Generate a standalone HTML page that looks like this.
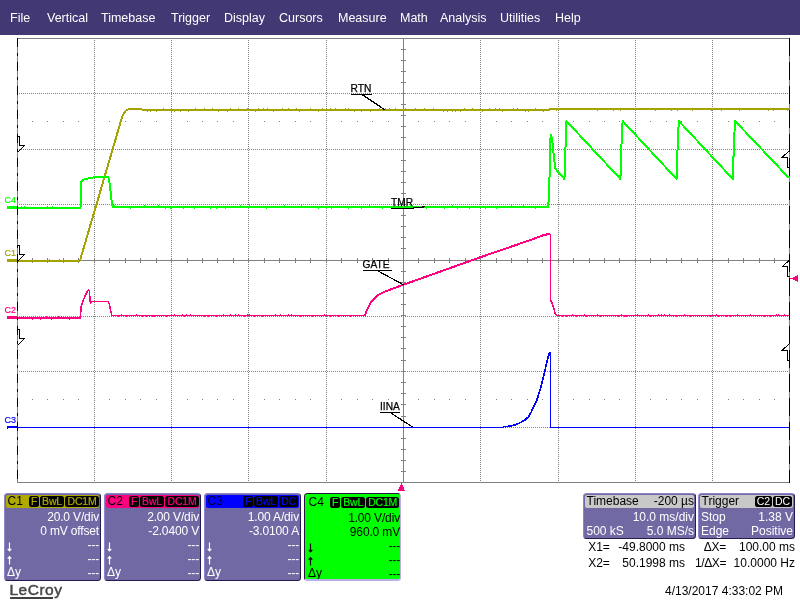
<!DOCTYPE html>
<html><head><meta charset="utf-8"><title>LeCroy</title>
<style>
html,body{margin:0;padding:0;background:#fff;}
body{width:800px;height:600px;position:relative;overflow:hidden;font-family:"Liberation Sans",sans-serif;font-size:12px;color:#000;}
#all{position:absolute;left:0;top:0;width:800px;height:600px;will-change:transform;}
#menu{position:absolute;left:0;top:0;width:800px;height:35px;background:#423874;color:#fff;}
#menu span{position:absolute;top:11px;line-height:14px;font-size:12.5px;white-space:nowrap;}
svg{position:absolute;left:0;top:0;}
svg text{font-family:"Liberation Sans",sans-serif;}
.ch{position:absolute;top:493px;width:97px;height:88px;box-sizing:border-box;background:#7169a4;border:1px solid;border-color:#8e86cc #241c52 #241c52 #8e86cc;border-radius:3.5px;overflow:hidden;color:#fff;}
.in{position:absolute;left:1px;top:1px;right:1px;bottom:1px;}
.ch.sel .in{left:0;top:0;right:0;bottom:0}
.ch .hd{position:absolute;left:0;top:0;right:0;height:13px;background:var(--c);border-radius:2px;}
.ch b{position:absolute;left:1.5px;top:0px;font-weight:normal;font-size:12px;line-height:12px;}
.ch i{-webkit-text-stroke:0.2px var(--c);position:absolute;top:1px;height:11px;background:#000;color:var(--c);border-radius:2.5px;font-style:normal;font-size:10.5px;line-height:11px;text-align:center;letter-spacing:-0.2px;}
.ch u{position:absolute;right:0px;text-decoration:none;font-size:12px;line-height:14px;white-space:nowrap;letter-spacing:-0.15px;}
.ch s{position:absolute;left:1px;text-decoration:none;font-size:12px;line-height:14px;}
.ch.sel{background:#00ff00;border-width:1px 1px 2px 1px;border-color:#241440 #b8b0e8 #b8b0e8 #241440;color:#000;}
.ch.sel .ar{left:2px;top:2px}
.ch.sel u{right:0px} .ch.sel s{left:3px} .ch.sel b{left:3.5px;top:1.7px} .ch.sel i{top:3px}
.ch.sel u,.ch.sel s{margin-top:2px}
.tb{position:absolute;top:493px;height:46px;box-sizing:border-box;background:#7169a4;border:1px solid;border-color:#8e86cc #241c52 #241c52 #8e86cc;border-radius:3.5px;overflow:hidden;color:#fff;}
.tb .hd{position:absolute;left:0;top:0;right:0;height:13px;background:#c8c8c8;border-radius:2px;}
.tb span{position:absolute;white-space:nowrap;font-size:12px;line-height:14px;}
.tb i{position:absolute;top:1px;height:11px;background:#000;color:#fff;border-radius:2.5px;font-style:normal;font-size:10.5px;line-height:11px;text-align:center;}
.x{position:absolute;white-space:nowrap;font-size:12px;line-height:14px;}
#logo{position:absolute;left:9.5px;top:580.6px;font-size:15.5px;font-weight:normal;-webkit-text-stroke:0.5px #484848;color:#484848;line-height:18px;letter-spacing:0.5px;}
#logo:after{content:'';position:absolute;left:0.5px;top:16.6px;width:43px;height:1.7px;background:#404040;}
</style></head>
<body><div id="all">
<div id="menu"><span style="left:10px">File</span><span style="left:47px">Vertical</span><span style="left:101px">Timebase</span><span style="left:171px">Trigger</span><span style="left:224px">Display</span><span style="left:279px">Cursors</span><span style="left:338px">Measure</span><span style="left:400px">Math</span><span style="left:440px">Analysis</span><span style="left:500px">Utilities</span><span style="left:555px">Help</span></div>
<svg width="800" height="600" viewBox="0 0 800 600" shape-rendering="crispEdges">
<rect x="17.5" y="38.5" width="772.0" height="444.0" fill="#fff" stroke="#808080" stroke-width="1"/>
<path d="M94.5,40 V482" stroke="#808080" stroke-width="1" stroke-dasharray="1 1"/>
<path d="M171.5,40 V482" stroke="#808080" stroke-width="1" stroke-dasharray="1 1"/>
<path d="M248.5,40 V482" stroke="#808080" stroke-width="1" stroke-dasharray="1 1"/>
<path d="M326.5,40 V482" stroke="#808080" stroke-width="1" stroke-dasharray="1 1"/>
<path d="M480.5,40 V482" stroke="#808080" stroke-width="1" stroke-dasharray="1 1"/>
<path d="M558.5,40 V482" stroke="#808080" stroke-width="1" stroke-dasharray="1 1"/>
<path d="M635.5,40 V482" stroke="#808080" stroke-width="1" stroke-dasharray="1 1"/>
<path d="M712.5,40 V482" stroke="#808080" stroke-width="1" stroke-dasharray="1 1"/>
<path d="M19,93.5 H789" stroke="#808080" stroke-width="1" stroke-dasharray="1 1"/>
<path d="M19,149.5 H789" stroke="#808080" stroke-width="1" stroke-dasharray="1 1"/>
<path d="M19,204.5 H789" stroke="#808080" stroke-width="1" stroke-dasharray="1 1"/>
<path d="M19,316.5 H789" stroke="#808080" stroke-width="1" stroke-dasharray="1 1"/>
<path d="M19,371.5 H789" stroke="#808080" stroke-width="1" stroke-dasharray="1 1"/>
<path d="M19,427.5 H789" stroke="#808080" stroke-width="1" stroke-dasharray="1 1"/>
<path d="M403.5,39 V482 M18,260.5 H789" stroke="#808080" stroke-width="1"/>
<path d="M401,49.5 H406 M401,60.5 H406 M401,71.5 H406 M401,82.5 H406 M401,93.5 H406 M401,104.5 H406 M401,115.5 H406 M401,126.5 H406 M401,137.5 H406 M401,149.5 H406 M401,160.5 H406 M401,171.5 H406 M401,182.5 H406 M401,193.5 H406 M401,204.5 H406 M401,215.5 H406 M401,226.5 H406 M401,237.5 H406 M401,248.5 H406 M401,260.5 H406 M401,271.5 H406 M401,282.5 H406 M401,293.5 H406 M401,304.5 H406 M401,315.5 H406 M401,326.5 H406 M401,337.5 H406 M401,348.5 H406 M401,360.5 H406 M401,371.5 H406 M401,382.5 H406 M401,393.5 H406 M401,404.5 H406 M401,416.5 H406 M401,427.5 H406 M401,438.5 H406 M401,449.5 H406 M401,460.5 H406 M401,471.5 H406 M32.5,258 V263 M47.5,258 V263 M63.5,258 V263 M78.5,258 V263 M94.5,258 V263 M109.5,258 V263 M125.5,258 V263 M140.5,258 V263 M156.5,258 V263 M171.5,258 V263 M187.5,258 V263 M202.5,258 V263 M217.5,258 V263 M233.5,258 V263 M248.5,258 V263 M264.5,258 V263 M279.5,258 V263 M295.5,258 V263 M310.5,258 V263 M326.5,258 V263 M341.5,258 V263 M357.5,258 V263 M372.5,258 V263 M388.5,258 V263 M403.5,258 V263 M418.5,258 V263 M434.5,258 V263 M449.5,258 V263 M465.5,258 V263 M480.5,258 V263 M496.5,258 V263 M511.5,258 V263 M527.5,258 V263 M542.5,258 V263 M558.5,258 V263 M573.5,258 V263 M589.5,258 V263 M604.5,258 V263 M619.5,258 V263 M635.5,258 V263 M650.5,258 V263 M666.5,258 V263 M681.5,258 V263 M697.5,258 V263 M712.5,258 V263 M728.5,258 V263 M743.5,258 V263 M759.5,258 V263 M774.5,258 V263" stroke="#808080" stroke-width="1"/>
<path d="M32,121.5 h1 M47,121.5 h1 M63,121.5 h1 M78,121.5 h1 M109,121.5 h1 M125,121.5 h1 M140,121.5 h1 M156,121.5 h1 M187,121.5 h1 M202,121.5 h1 M217,121.5 h1 M233,121.5 h1 M264,121.5 h1 M279,121.5 h1 M295,121.5 h1 M310,121.5 h1 M341,121.5 h1 M357,121.5 h1 M372,121.5 h1 M388,121.5 h1 M418,121.5 h1 M434,121.5 h1 M449,121.5 h1 M465,121.5 h1 M496,121.5 h1 M511,121.5 h1 M527,121.5 h1 M542,121.5 h1 M573,121.5 h1 M589,121.5 h1 M604,121.5 h1 M619,121.5 h1 M650,121.5 h1 M666,121.5 h1 M681,121.5 h1 M697,121.5 h1 M728,121.5 h1 M743,121.5 h1 M759,121.5 h1 M774,121.5 h1 M32,399.5 h1 M47,399.5 h1 M63,399.5 h1 M78,399.5 h1 M109,399.5 h1 M125,399.5 h1 M140,399.5 h1 M156,399.5 h1 M187,399.5 h1 M202,399.5 h1 M217,399.5 h1 M233,399.5 h1 M264,399.5 h1 M279,399.5 h1 M295,399.5 h1 M310,399.5 h1 M341,399.5 h1 M357,399.5 h1 M372,399.5 h1 M388,399.5 h1 M418,399.5 h1 M434,399.5 h1 M449,399.5 h1 M465,399.5 h1 M496,399.5 h1 M511,399.5 h1 M527,399.5 h1 M542,399.5 h1 M573,399.5 h1 M589,399.5 h1 M604,399.5 h1 M619,399.5 h1 M650,399.5 h1 M666,399.5 h1 M681,399.5 h1 M697,399.5 h1 M728,399.5 h1 M743,399.5 h1 M759,399.5 h1 M774,399.5 h1" stroke="#808080" stroke-width="1"/>
<polyline points="7.0,260.5 80.0,260.5 122.0,117.3 124.0,113.0 126.0,110.5 129.0,109.0 132.0,108.5 140.0,108.5 142.0,109.5 165.0,109.5 170.0,110.0 548.0,110.0 550.0,109.4 789.0,109.4" fill="none" stroke="#a4a400" stroke-width="2" stroke-linejoin="round" />
<polyline points="7.0,207.5 80.5,207.5 81.5,181.0 84.0,179.5 95.0,177.0 108.0,177.0 109.0,179.0 110.0,187.0 111.0,195.0 112.0,204.0 113.0,207.0 548.0,207.0 549.0,197.0 549.7,170.0 550.6,134.5 552.0,138.0 553.0,147.0 554.0,158.0 555.0,166.0 555.6,169.0 564.4,179.0 565.0,168.0 565.6,143.0 566.4,121.0 620.4,179.0 621.4,147.0 622.6,121.0 676.6,179.0 677.6,147.0 678.8,121.0 732.8,179.0 733.8,147.0 735.0,121.0 789.0,178.0" fill="none" stroke="#00ff00" stroke-width="2" stroke-linejoin="round" />
<polyline points="7.0,318.0 80.5,318.0" fill="none" stroke="#ff0080" stroke-width="2" stroke-linejoin="round" />
<polyline points="80.5,318.0 81.0,306.7 83.0,301.0 85.0,296.0 87.0,292.0 88.5,290.2 89.3,291.0 90.4,303.0 92.0,301.5 108.3,301.5 109.5,305.0 110.5,310.0 111.7,315.0 113.0,315.5" fill="none" stroke="#ff0080" stroke-width="1.5" stroke-linejoin="round" />
<polyline points="113.0,315.5 365.0,315.5" fill="none" stroke="#ff0080" stroke-width="1" stroke-linejoin="round" />
<polyline points="365.0,315.5 366.5,311.0 368.5,307.0 370.5,303.0 373.0,299.6 376.0,296.7 379.0,294.5 385.0,291.5 392.0,289.0 403.7,284.6 479.6,257.5 532.0,239.5 544.0,235.0 547.0,234.4 550.3,234.4" fill="none" stroke="#ff0080" stroke-width="2" stroke-linejoin="round" />
<polyline points="550.3,234.4 550.5,300.5 551.5,301.5 553.0,305.5 554.5,311.0 555.6,314.6 557.0,315.5" fill="none" stroke="#ff0080" stroke-width="1.5" stroke-linejoin="round" />
<polyline points="557.0,315.5 789.0,315.5" fill="none" stroke="#ff0080" stroke-width="1" stroke-linejoin="round" />
<polyline points="7.0,427.5 500.0,427.5 505.0,426.8 511.7,425.8 516.0,424.6 520.0,422.8 524.5,420.3 528.3,417.0 531.0,412.5 533.3,407.5 536.7,400.8 540.0,390.0 543.3,377.5 545.8,366.7 548.3,356.7 549.5,352.5 550.3,352.5 550.5,427.5 789.0,427.5" fill="none" stroke="#0000ff" stroke-width="1.2" stroke-linejoin="round" />
<polyline points="505.0,426.8 511.7,425.8 516.0,424.6 520.0,422.8 524.5,420.3 528.3,417.0 531.0,412.5 533.3,407.5 536.7,400.8 540.0,390.0 543.3,377.5 545.8,366.7 548.3,356.7 549.5,352.5 550.3,352.5" fill="none" stroke="#0000ff" stroke-width="1.7" stroke-linejoin="round" />
<path d="M20.5,260.5 v1.6 M26.5,260.5 v1.6 M29.5,260.5 v1.6 M35.5,260.5 v1.6 M46.5,260.5 v1.6 M49.5,260.5 v-1.6 M55.5,260.5 v1.6 M59.5,260.5 v-1.6 M62.5,260.5 v1.6 M73.5,260.5 v1.6" stroke="#a4a400" stroke-width="1" fill="none"/>
<path d="M147.5,110 v1.6 M150.5,110 v1.6 M156.5,110 v1.6 M163.5,110 v-1.6 M171.5,110 v1.6 M174.5,110 v1.6 M180.5,110 v1.6 M188.5,110 v1.6 M195.5,110 v-1.6 M204.5,110 v-1.6 M212.5,110 v-1.6 M218.5,110 v1.6 M227.5,110 v1.6 M230.5,110 v-1.6 M238.5,110 v-1.6 M247.5,110 v-1.6 M255.5,110 v1.6 M258.5,110 v-1.6 M263.5,110 v-1.6 M267.5,110 v-1.6 M273.5,110 v1.6 M282.5,110 v-1.6 M288.5,110 v-1.6 M296.5,110 v-1.6 M299.5,110 v1.6 M310.5,110 v-1.6 M318.5,110 v1.6 M322.5,110 v-1.6 M330.5,110 v-1.6 M335.5,110 v-1.6 M345.5,110 v-1.6 M348.5,110 v-1.6 M354.5,110 v1.6 M361.5,110 v1.6 M370.5,110 v1.6 M379.5,110 v-1.6 M385.5,110 v-1.6 M389.5,110 v-1.6 M395.5,110 v-1.6 M405.5,110 v-1.6 M415.5,110 v-1.6 M424.5,110 v-1.6 M433.5,110 v-1.6 M443.5,110 v1.6 M447.5,110 v1.6 M452.5,110 v1.6 M455.5,110 v1.6 M460.5,110 v1.6 M464.5,110 v-1.6 M472.5,110 v-1.6 M482.5,110 v1.6 M489.5,110 v-1.6 M495.5,110 v-1.6 M499.5,110 v-1.6 M502.5,110 v1.6 M513.5,110 v-1.6 M517.5,110 v-1.6 M525.5,110 v1.6 M528.5,110 v1.6 M535.5,110 v-1.6 M543.5,110 v1.6" stroke="#a4a400" stroke-width="1" fill="none"/>
<path d="M556.5,109.4 v1.6 M564.5,109.4 v-1.6 M572.5,109.4 v-1.6 M576.5,109.4 v-1.6 M587.5,109.4 v-1.6 M594.5,109.4 v-1.6 M597.5,109.4 v1.6 M606.5,109.4 v-1.6 M613.5,109.4 v1.6 M620.5,109.4 v1.6 M631.5,109.4 v-1.6 M635.5,109.4 v1.6 M644.5,109.4 v-1.6 M655.5,109.4 v1.6 M664.5,109.4 v-1.6 M671.5,109.4 v1.6 M677.5,109.4 v1.6 M684.5,109.4 v-1.6 M692.5,109.4 v1.6 M702.5,109.4 v-1.6 M711.5,109.4 v1.6 M715.5,109.4 v-1.6 M721.5,109.4 v1.6 M732.5,109.4 v-1.6 M739.5,109.4 v1.6 M748.5,109.4 v-1.6 M754.5,109.4 v-1.6 M765.5,109.4 v-1.6 M768.5,109.4 v1.6 M773.5,109.4 v1.6 M779.5,109.4 v-1.6 M787.5,109.4 v1.6" stroke="#a4a400" stroke-width="1" fill="none"/>
<path d="M21.5,207.5 v-1.8 M24.5,207.5 v-1.8 M28.5,207.5 v1.8 M36.5,207.5 v1.8 M42.5,207.5 v1.8 M47.5,207.5 v-1.8 M52.5,207.5 v-1.8 M57.5,207.5 v1.8 M65.5,207.5 v1.8 M73.5,207.5 v1.8" stroke="#00ff00" stroke-width="1" fill="none"/>
<path d="M114.5,207 v-1.8 M130.5,207 v1.8 M144.5,207 v-1.8 M158.5,207 v-1.8 M165.5,207 v1.8 M170.5,207 v1.8 M183.5,207 v1.8 M194.5,207 v1.8 M210.5,207 v1.8 M216.5,207 v1.8 M225.5,207 v1.8 M240.5,207 v-1.8 M249.5,207 v-1.8 M266.5,207 v1.8 M284.5,207 v-1.8 M301.5,207 v-1.8 M318.5,207 v1.8 M331.5,207 v1.8 M348.5,207 v1.8 M361.5,207 v1.8 M369.5,207 v-1.8 M382.5,207 v1.8 M395.5,207 v-1.8 M410.5,207 v-1.8 M426.5,207 v1.8 M444.5,207 v1.8 M452.5,207 v-1.8 M457.5,207 v1.8 M469.5,207 v1.8 M485.5,207 v1.8 M496.5,207 v1.8 M511.5,207 v-1.8 M523.5,207 v-1.8 M535.5,207 v1.8" stroke="#00ff00" stroke-width="1" fill="none"/>
<path d="M23.5,318 v-1.8 M32.5,318 v1.8 M40.5,318 v1.8 M46.5,318 v-1.8 M51.5,318 v1.8 M58.5,318 v-1.8 M61.5,318 v-1.8 M69.5,318 v1.8 M79.5,318 v-1.8" stroke="#ff0080" stroke-width="1" fill="none"/>
<path d="M118.5,315.5 v1.5 M121.5,315.5 v-1.5 M126.5,315.5 v1.5 M129.5,315.5 v1.5 M136.5,315.5 v-1.5 M142.5,315.5 v1.5 M146.5,315.5 v1.5 M149.5,315.5 v1.5 M152.5,315.5 v1.5 M154.5,315.5 v1.5 M159.5,315.5 v1.5 M161.5,315.5 v1.5 M166.5,315.5 v1.5 M171.5,315.5 v-1.5 M174.5,315.5 v-1.5 M182.5,315.5 v-1.5 M184.5,315.5 v1.5 M186.5,315.5 v-1.5 M190.5,315.5 v-1.5 M197.5,315.5 v1.5 M204.5,315.5 v1.5 M208.5,315.5 v1.5 M216.5,315.5 v1.5 M221.5,315.5 v1.5 M223.5,315.5 v-1.5 M230.5,315.5 v-1.5 M235.5,315.5 v-1.5 M238.5,315.5 v-1.5 M244.5,315.5 v1.5 M247.5,315.5 v-1.5 M249.5,315.5 v-1.5 M254.5,315.5 v1.5 M262.5,315.5 v1.5 M269.5,315.5 v1.5 M275.5,315.5 v-1.5 M280.5,315.5 v-1.5 M288.5,315.5 v-1.5 M291.5,315.5 v-1.5 M295.5,315.5 v1.5 M300.5,315.5 v1.5 M307.5,315.5 v1.5 M312.5,315.5 v1.5 M315.5,315.5 v1.5 M321.5,315.5 v1.5 M324.5,315.5 v-1.5 M330.5,315.5 v1.5 M338.5,315.5 v1.5 M343.5,315.5 v1.5 M345.5,315.5 v1.5 M350.5,315.5 v1.5 M355.5,315.5 v1.5 M363.5,315.5 v1.5" stroke="#ff0080" stroke-width="1" fill="none"/>
<path d="M562.5,315.5 v1.5 M566.5,315.5 v1.5 M572.5,315.5 v-1.5 M576.5,315.5 v1.5 M584.5,315.5 v-1.5 M586.5,315.5 v1.5 M593.5,315.5 v1.5 M597.5,315.5 v-1.5 M600.5,315.5 v1.5 M607.5,315.5 v1.5 M615.5,315.5 v1.5 M618.5,315.5 v1.5 M621.5,315.5 v-1.5 M624.5,315.5 v1.5 M626.5,315.5 v1.5 M633.5,315.5 v1.5 M637.5,315.5 v-1.5 M645.5,315.5 v1.5 M648.5,315.5 v-1.5 M650.5,315.5 v1.5 M653.5,315.5 v1.5 M658.5,315.5 v-1.5 M661.5,315.5 v-1.5 M664.5,315.5 v-1.5 M667.5,315.5 v1.5 M669.5,315.5 v-1.5 M673.5,315.5 v1.5 M676.5,315.5 v1.5 M684.5,315.5 v-1.5 M690.5,315.5 v1.5 M697.5,315.5 v1.5 M701.5,315.5 v1.5 M707.5,315.5 v1.5 M710.5,315.5 v1.5 M716.5,315.5 v-1.5 M718.5,315.5 v1.5 M726.5,315.5 v1.5 M730.5,315.5 v1.5 M737.5,315.5 v-1.5 M745.5,315.5 v1.5 M750.5,315.5 v-1.5 M757.5,315.5 v1.5 M764.5,315.5 v1.5 M770.5,315.5 v1.5 M776.5,315.5 v-1.5 M778.5,315.5 v-1.5 M784.5,315.5 v-1.5" stroke="#ff0080" stroke-width="1" fill="none"/>
<path d="M7,259 H17 V261 H8 V262 H7 Z" fill="#a4a400"/>
<path d="M7,206 H17 V208 H8 V209 H7 Z" fill="#00ff00"/>
<path d="M7,316 H17 V318 H8 V319 H7 Z" fill="#ff0080"/>
<path d="M7,426 H17 V428 H8 V429 H7 Z" fill="#0000ff"/>
<path d="M17.5,38 V483" stroke="#000" stroke-width="1.6" stroke-dasharray="9 6 3 6"/>
<path d="M789.5,38 V483" stroke="#000" stroke-width="1.6" stroke-dasharray="18 6"/>
<path d="M17.5,136.5 H19.5 V145.5 H24.5 L17.5,152.5" fill="none" stroke="#000" stroke-width="1"/>
<path d="M17.5,245.5 H19.5 V254.5 H24.5 L17.5,261.5" fill="none" stroke="#000" stroke-width="1"/>
<path d="M17.5,329.5 H19.5 V338.5 H24.5 L17.5,345.5" fill="none" stroke="#000" stroke-width="1"/>
<path d="M789.5,150.5 L782.5,157.0 H787.5 V167.0 H789.5" fill="none" stroke="#000" stroke-width="1"/>
<path d="M789.5,260 L782.5,266.5 H787.5 V276.5 H789.5" fill="none" stroke="#000" stroke-width="1"/>
<path d="M789.5,343.5 L782.5,350.0 H787.5 V360.0 H789.5" fill="none" stroke="#000" stroke-width="1"/>
<path d="M790.5,278.5 L798,275 V282 Z" fill="#ff0080"/>
<path d="M401.5,483 L405.2,491 H397.8 Z" fill="#ff0080"/>
<text x="350.5" y="92" font-size="10.2" fill="#000" stroke="#000" stroke-width="0.25">RTN</text>
<path d="M351,94.3 H372 M362,94.5 L384.7,109.7" stroke="#000" stroke-width="1.2" fill="none"/>
<text x="391" y="205.6" font-size="10.2" fill="#000" stroke="#000" stroke-width="0.25">TMR</text>
<path d="M391,208.3 H413 M413,208 L425.5,206.8" stroke="#000" stroke-width="1.2" fill="none"/>
<text x="362.5" y="268.3" font-size="10.2" fill="#000" stroke="#000" stroke-width="0.25">GATE</text>
<path d="M363,270.7 H392 M378,271 L404,285" stroke="#000" stroke-width="1.2" fill="none"/>
<text x="380" y="409.7" font-size="10.2" fill="#000" stroke="#000" stroke-width="0.25">IINA</text>
<path d="M380,412.7 H400 M391,413 L412.5,427" stroke="#000" stroke-width="1.2" fill="none"/>
<text x="4.5" y="202.7" font-size="9" fill="#00ff00" stroke="#00ff00" stroke-width="0.2">C4</text>
<text x="4.5" y="255.7" font-size="9" fill="#a4a400" stroke="#a4a400" stroke-width="0.2">C1</text>
<text x="4.5" y="312.7" font-size="9" fill="#ff0080" stroke="#ff0080" stroke-width="0.2">C2</text>
<text x="4.5" y="422.7" font-size="9" fill="#0000ff" stroke="#0000ff" stroke-width="0.2">C3</text>
</svg>
<div class="ch" style="left:4px;--c:#b0aa00"><div class="in"><div class="hd"></div><b style="color:#000">C1</b><i style="left:23px;width:10px">F</i><i style="left:34px;width:24px">BwL</i><i style="left:59px;width:34px">DC1M</i>
<u style="top:15.2px">20.0 V/div</u><u style="top:29px">0 mV offset</u><u style="top:42.8px">---</u><u style="top:56.8px">---</u><u style="top:70.6px">---</u>
<svg class="ar" width="12" height="84" viewBox="0 0 12 84" shape-rendering="auto"><path d="M3.5,47.4 V56 M1.7,53.8 L3.5,55.8 L5.3,53.8 M3.5,69.6 V61.4 M1.7,63.6 L3.5,61.6 L5.3,63.6" fill="none" stroke="currentColor" stroke-width="1.2"/></svg><s style="top:70.4px">&#916;y</s></div></div><div class="ch" style="left:104px;--c:#ff0080"><div class="in"><div class="hd"></div><b style="color:#000">C2</b><i style="left:23px;width:10px">F</i><i style="left:34px;width:24px">BwL</i><i style="left:59px;width:34px">DC1M</i>
<u style="top:15.2px">2.00 V/div</u><u style="top:29px">-2.0400 V</u><u style="top:42.8px">---</u><u style="top:56.8px">---</u><u style="top:70.6px">---</u>
<svg class="ar" width="12" height="84" viewBox="0 0 12 84" shape-rendering="auto"><path d="M3.5,47.4 V56 M1.7,53.8 L3.5,55.8 L5.3,53.8 M3.5,69.6 V61.4 M1.7,63.6 L3.5,61.6 L5.3,63.6" fill="none" stroke="currentColor" stroke-width="1.2"/></svg><s style="top:70.4px">&#916;y</s></div></div><div class="ch" style="left:204px;--c:#0000ff"><div class="in"><div class="hd"></div><b style="color:#000020">C3</b><i style="left:37px;width:10px">F</i><i style="left:48px;width:24px">BwL</i><i style="left:73px;width:19px">DC</i>
<u style="top:15.2px">1.00 A/div</u><u style="top:29px">-3.0100 A</u><u style="top:42.8px">---</u><u style="top:56.8px">---</u><u style="top:70.6px">---</u>
<svg class="ar" width="12" height="84" viewBox="0 0 12 84" shape-rendering="auto"><path d="M3.5,47.4 V56 M1.7,53.8 L3.5,55.8 L5.3,53.8 M3.5,69.6 V61.4 M1.7,63.6 L3.5,61.6 L5.3,63.6" fill="none" stroke="currentColor" stroke-width="1.2"/></svg><s style="top:70.4px">&#916;y</s></div></div><div class="ch sel" style="left:304px;--c:#00ff00"><div class="in"><div class="hd"></div><b style="color:#000">C4</b><i style="left:25.2px;width:10px">F</i><i style="left:36.2px;width:24px">BwL</i><i style="left:61px;width:33.3px">DC1M</i>
<u style="top:15.2px">1.00 V/div</u><u style="top:29px">960.0 mV</u><u style="top:42.8px">---</u><u style="top:56.8px">---</u><u style="top:70.6px">---</u>
<svg class="ar" width="12" height="84" viewBox="0 0 12 84" shape-rendering="auto"><path d="M3.5,47.4 V56 M1.7,53.8 L3.5,55.8 L5.3,53.8 M3.5,69.6 V61.4 M1.7,63.6 L3.5,61.6 L5.3,63.6" fill="none" stroke="currentColor" stroke-width="1.2"/></svg><s style="top:70.4px">&#916;y</s></div></div>
<div class="tb" style="left:583px;width:113px"><div class="in"><div class="hd"></div>
<span style="left:1.5px;top:-1px;color:#000">Timebase</span><span style="right:0;top:-1px;color:#000">-200 &#181;s</span>
<span style="right:0;top:15.3px">10.0 ms/div</span>
<span style="left:1.5px;top:29px">500 kS</span><span style="right:0;top:29px">5.0 MS/s</span></div></div>
<div class="tb" style="left:698px;width:97px"><div class="in"><div class="hd"></div>
<span style="left:1.5px;top:-1px;color:#000">Trigger</span><i style="left:55px;width:17px">C2</i><i style="left:73px;width:19px">DC</i>
<span style="left:1px;top:15.3px">Stop</span><span style="right:0px;top:15.3px">1.38 V</span>
<span style="left:1px;top:29px">Edge</span><span style="right:0px;top:29px">Positive</span></div></div>
<div class="x" style="left:588.2px;top:539.8px">X1=</div><div class="x" style="right:115px;top:539.8px">-49.8000 ms</div>
<div class="x" style="right:74px;top:539.8px;letter-spacing:-0.3px">&#916;X=</div><div class="x" style="right:5px;top:539.8px">100.00 ms</div>
<div class="x" style="left:588.2px;top:555.9px">X2=</div><div class="x" style="right:115px;top:555.9px">50.1998 ms</div>
<div class="x" style="right:74px;top:555.9px;letter-spacing:-0.4px">1/&#916;X=</div><div class="x" style="right:5px;top:555.9px">10.0000 Hz</div>
<div class="x" style="left:665px;top:584px">4/13/2017 4:33:02 PM</div>
<div id="logo">LeCroy</div>
</div></body></html>
